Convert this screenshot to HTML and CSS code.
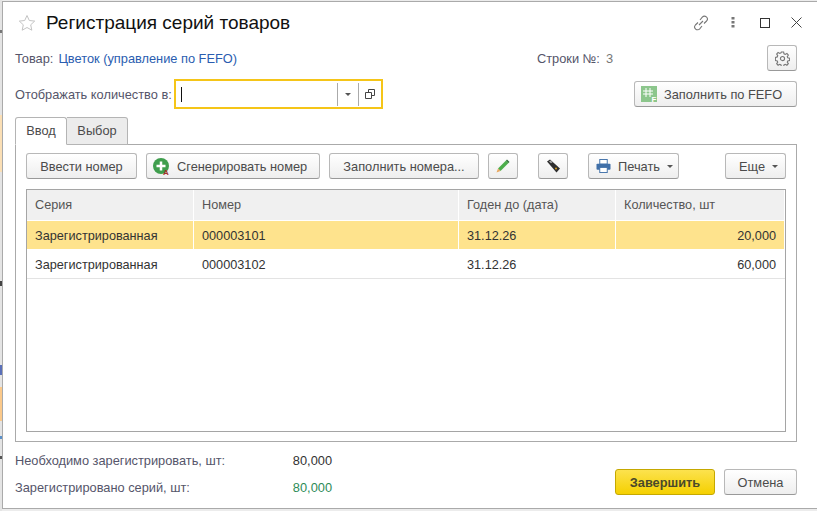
FILE: index.html
```html
<!DOCTYPE html>
<html lang="ru">
<head>
    <meta charset="UTF-8">
    <title>Регистрация серий товаров</title>
    <link rel="stylesheet" href="styles.css">
</head>
<body>
    <div class="backdrop"></div>
    <div class="window">
        <div class="title-bar">
            <svg class="star" width="18" height="18" viewBox="0 0 18 18"><path d="M9 1.500l2.300 5 5.400.6-4 3.700 1.100 5.400L9 13.500l-4.800 2.700 1.100-5.400-4-3.700 5.400-.6z" fill="#fff" stroke="#c4c4c4"/></svg>
            <h1 class="title">Регистрация серий товаров</h1>
            <div class="win-icons">
                <svg class="icon-link" width="16" height="16" viewBox="0 0 16 16" fill="none" stroke="#777" stroke-width="1.100"><path d="M6 10l4-4M7 5l2.300-2.800a2.800 2.800 0 0 1 4.300 3.800L11 8.500M9 11l-2.300 2.800a2.800 2.800 0 0 1-4.300-3.800L5 7.500"/></svg>
                <svg class="icon-dots" width="4" height="11" viewBox="0 0 4 11" fill="#777"><rect x="0.500" y="0" width="3" height="2.500"/><rect x="0.500" y="4" width="3" height="2.500"/><rect x="0.500" y="8" width="3" height="2.500"/></svg>
                <svg class="icon-max" width="10" height="10" viewBox="0 0 10 10" fill="none" stroke="#333"><rect x="0.500" y="0.500" width="9" height="9"/></svg>
                <svg class="icon-close" width="11" height="11" viewBox="0 0 11 11" fill="none" stroke="#444"><path d="M.5.500l10 10M10.500.500l-10 10"/></svg>
            </div>
        </div>

        <div class="row row-item">
            <span class="label">Товар:</span>
            <a class="link">Цветок (управление по FEFO)</a>
            <span class="label row-num">Строки №:</span>
            <span class="num-val">3</span>
            <button class="btn btn-gear">
                <svg width="15" height="15" viewBox="0 0 16 16" fill="none" stroke="#777" stroke-width="1.200"><path d="M6.800 1h2.400l.4 2 1.300.6 1.800-1 1.500 1.700-1.100 1.700.5 1.300 2 .5v2.400l-2 .4-.5 1.300 1.100 1.700-1.500 1.600-1.800-1-1.300.6-.4 2H6.800l-.4-2-1.300-.6-1.800 1-1.500-1.600 1.100-1.700-.5-1.300-2-.4V6.800l2-.5.5-1.300-1.100-1.700 1.500-1.700 1.800 1 1.300-.6z"/><circle cx="8" cy="8" r="2.200"/></svg>
            </button>
        </div>

        <div class="row row-unit">
            <span class="label unit-label">Отображать количество в:</span>
            <div class="combo">
                <span class="caret"></span>
                <span class="combo-btn"><i class="arrow"></i></span>
                <span class="combo-btn combo-open">
                    <svg width="10" height="10" viewBox="0 0 10 10" fill="none" stroke="#444"><path d="M3.500 3V.5h6v6H7M.5 3.500h6v6h-6z"/></svg>
                </span>
            </div>
            <button class="btn btn-fefo">
                <svg width="16" height="16" viewBox="0 0 16 16"><rect width="16" height="16" fill="#8cc68c"/><path d="M5 2v9M9 2v9M2 5h10M2 8h10" stroke="#fff" fill="none"/><text class="icon-letter" x="10.500" y="15.500" fill="#fff">F</text></svg>
                Заполнить по FEFO
            </button>
        </div>

        <div class="tabs">
            <div class="tab tab-active">Ввод</div>
            <div class="tab">Выбор</div>
        </div>

        <div class="tab-panel">
            <div class="toolbar">
                <button class="btn btn-enter">Ввести номер</button>
                <button class="btn btn-gen">
                    <svg width="17" height="17" viewBox="0 0 17 17"><circle cx="8" cy="8" r="8" fill="#3f9e4d"/><path d="M8 3.500v9M3.500 8h9" stroke="#fff" stroke-width="2.500"/><text class="icon-letter" x="10" y="16.500" fill="#a5302a">A</text></svg>
                    Сгенерировать номер
                </button>
                <button class="btn btn-fill">Заполнить номера...</button>
                <button class="btn btn-icon">
                    <svg width="14" height="14" viewBox="0 0 14 14"><path d="M10 1.500l2.500 2.500-8 8L2 9.500z" fill="#4cae4c"/><path d="M10 1.500L11 .5l2.500 2.500-1 1z" fill="#2f6f3a"/><path d="M2 9.500L4.500 12 .5 13.500z" fill="#e8a860"/></svg>
                </button>
                <button class="btn btn-icon btn-apart">
                    <svg width="15" height="14" viewBox="0 0 15 14"><path d="M1 2.500L4 .5l10 9-3.500 4z" fill="#2f2f2f"/><path d="M3 2.500l1.500-1 2 1.800-1.500 1z" fill="#aaa"/><circle cx="10" cy="9.500" r="1" fill="#d8a020"/></svg>
                </button>
                <button class="btn btn-print btn-apart">
                    <svg width="15" height="14" viewBox="0 0 16 15"><rect x="4" y="0.500" width="8" height="5" fill="#fff" stroke="#3f6fa8"/><rect x="0.500" y="5" width="15" height="6.500" rx="1" fill="#3f6fa8"/><rect x="4" y="9" width="8" height="5.500" fill="#fff" stroke="#3f6fa8"/></svg>
                    Печать <i class="arrow"></i>
                </button>
                <button class="btn btn-more">Еще <i class="arrow"></i></button>
            </div>

            <div class="grid">
                <div class="grid-row grid-head">
                    <div class="cell">Серия</div>
                    <div class="cell">Номер</div>
                    <div class="cell">Годен до (дата)</div>
                    <div class="cell">Количество, шт</div>
                </div>
                <div class="grid-row grid-selected">
                    <div class="cell">Зарегистрированная</div>
                    <div class="cell">000003101</div>
                    <div class="cell">31.12.26</div>
                    <div class="cell cell-num">20,000</div>
                </div>
                <div class="grid-row">
                    <div class="cell">Зарегистрированная</div>
                    <div class="cell">000003102</div>
                    <div class="cell">31.12.26</div>
                    <div class="cell cell-num">60,000</div>
                </div>
            </div>
        </div>

        <div class="footer">
            <div class="totals">
                <span class="label">Необходимо зарегистрировать, шт:</span>
                <span class="total-val">80,000</span>
                <span class="label">Зарегистрировано серий, шт:</span>
                <span class="total-val total-ok">80,000</span>
            </div>
            <div class="actions">
                <button class="btn btn-finish">Завершить</button>
                <button class="btn btn-cancel">Отмена</button>
            </div>
        </div>
    </div>
</body>
</html>
```

FILE: styles.css
```css
* {
    box-sizing: border-box;
}

body {
    margin: 0;
    width: 817px;
    height: 511px;
    overflow: hidden;
    display: flex;
    background-color: #ececec;
    font-family: "Liberation Sans", Arial, sans-serif;
    font-size: 12.800px;
    color: #4b4b4b;
}

/* sliver of the page behind the dialog */
.backdrop {
    width: 2px;
    flex-shrink: 0;
    background: linear-gradient(#e4e4e4 0 30px, #777 30px 33px, #e4e4e4 33px 115px, #fbdfb5 115px 172px,
        #e4e4e4 172px 281px, #444 281px 286px, #e4e4e4 286px 365px, #5a6fb8 365px 375px, #e4e4e4 375px 387px,
        #fbc98a 387px 421px, #e4e4e4 421px 436px, #5a8fc8 436px 439px, #e4e4e4 439px 456px, #555 456px 459px,
        #e4e4e4 459px);
}

.window {
    flex: 1;
    height: 508px;
    margin-top: 1px;
    padding: 0 20px 0 12px;
    background-color: #fff;
    border: 1px solid #aaa;
    border-right: none;
    display: flex;
    flex-direction: column;
}

.title-bar {
    height: 43px;
    flex-shrink: 0;
    display: flex;
    align-items: center;
    gap: 10px;
    padding: 0 0 2px 3px;
}

.title {
    margin: 0;
    font-size: 19px;
    font-weight: normal;
    color: #111;
}

.win-icons {
    margin-left: auto;
    margin-right: -5px;
    display: flex;
    align-items: center;
}

.icon-dots {
    margin-left: 22px;
}

.icon-max {
    margin-left: 25px;
}

.icon-close {
    margin-left: 21px;
}

.row {
    display: flex;
    align-items: center;
    flex-shrink: 0;
}

.row-item {
    height: 26px;
}

.label {
    color: #55556a;
    white-space: nowrap;
}

.link {
    margin-left: 5px;
    color: #2a5db0;
}

.row-num {
    margin-left: 300px;
}

.num-val {
    margin-left: 6px;
    color: #777;
}

.btn {
    height: 26px;
    padding: 0 14px;
    display: inline-flex;
    align-items: center;
    gap: 7px;
    background: linear-gradient(#fff, #eee);
    border: 1px solid #b8b8b8;
    border-bottom-color: #999;
    border-radius: 3px;
    font-family: inherit;
    font-size: 12.800px;
    color: #4b4b4b;
    white-space: nowrap;
    flex-shrink: 0;
}

.icon-letter {
    font-family: "Liberation Sans", Arial, sans-serif;
    font-size: 8px;
    font-weight: bold;
}

.btn-gear {
    width: 30px;
    padding: 0;
    justify-content: center;
    margin-left: auto;
}

.row-unit {
    height: 30px;
    margin-top: 8px;
}

.unit-label {
    width: 159px;
}

.combo {
    width: 209px;
    height: 30px;
    padding-left: 5px;
    display: flex;
    align-items: center;
    border: 2px solid #f5c518;
}

.caret {
    width: 1px;
    height: 15px;
    margin-right: auto;
    background-color: #111;
}

.combo-btn {
    width: 21px;
    height: 23px;
    display: flex;
    align-items: center;
    justify-content: center;
    border-left: 1px solid #aaa;
}

.combo-open {
    width: 23px;
}

.arrow {
    display: inline-block;
    border-left: 3px solid transparent;
    border-right: 3px solid transparent;
    border-top: 3px solid #555;
}

.btn-fefo {
    margin-left: auto;
    width: 163px;
    padding: 0 6px;
}

.tabs {
    display: flex;
    height: 28px;
    flex-shrink: 0;
    margin-top: 8px;
    position: relative;
    z-index: 1;
}

.tab {
    height: 28px;
    width: 61px;
    padding-bottom: 2px;
    justify-content: center;
    display: flex;
    align-items: center;
    background-color: #ececec;
    border: 1px solid #b4b4b4;
    border-left: none;
    border-radius: 0 3px 0 0;
}

.tab-active {
    width: 52px;
    background-color: #fff;
    border-left: 1px solid #b4b4b4;
    border-bottom-color: #fff;
    border-radius: 3px 3px 0 0;
}

.tab-panel {
    height: 298px;
    flex-shrink: 0;
    margin-top: -1px;
    padding: 8px 10px 9px;
    border: 1px solid #aaa;
    display: flex;
    flex-direction: column;
}

.toolbar {
    display: flex;
    gap: 9px;
}

.btn-enter {
    width: 111px;
    justify-content: center;
    padding: 0;
}

.btn-gen {
    width: 174px;
    padding: 0 0 0 6px;
}

.btn-fill {
    width: 150px;
    justify-content: center;
    padding: 0;
}

.btn-icon {
    width: 30px;
    padding: 0;
    justify-content: center;
}

.btn-apart {
    margin-left: 11px;
}

.btn-print {
    width: 91px;
    padding: 0 0 0 7px;
}

.btn-more {
    margin-left: auto;
    width: 61px;
    padding: 0 0 0 13px;
}

.grid {
    flex: 1;
    margin-top: 10px;
    border: 1px solid #a5a5a5;
    font-size: 12.700px;
}

.grid-row {
    height: 29px;
    display: grid;
    grid-template-columns: 167px 265px 157px 1fr;
    border-bottom: 1px solid #e3e3e3;
    color: #333;
}

.grid-head {
    height: 31px;
    background-color: #f0f0f0;
    color: #555;
    border-bottom: 1px solid #fff;
}

.grid-selected {
    height: 29px;
    background-color: #fee38d;
    border-bottom-color: #fff;
}

.cell {
    padding: 1px 8px 0;
    display: flex;
    align-items: center;
    border-right: 1px solid #fff;
}

.grid-head .cell {
    padding-top: 0;
}

.cell-num {
    justify-content: flex-end;
}

.footer {
    flex: 1;
    display: flex;
    justify-content: space-between;
}

.totals {
    width: 317px;
    margin-top: 5px;
    display: grid;
    grid-template-columns: 1fr auto;
    grid-auto-rows: 27px;
    align-items: center;
}

.total-val {
    color: #333;
}

.total-ok {
    color: #2e8b57;
}

.actions {
    display: flex;
    align-items: flex-end;
    gap: 9px;
    padding-bottom: 13px;
}

.btn-finish {
    width: 100px;
    justify-content: center;
    background: linear-gradient(#fce24e, #f5d000);
    border-color: #c5a800;
    font-weight: bold;
    color: #4a4a2a;
}

.btn-cancel {
    width: 73px;
    justify-content: center;
}
```
